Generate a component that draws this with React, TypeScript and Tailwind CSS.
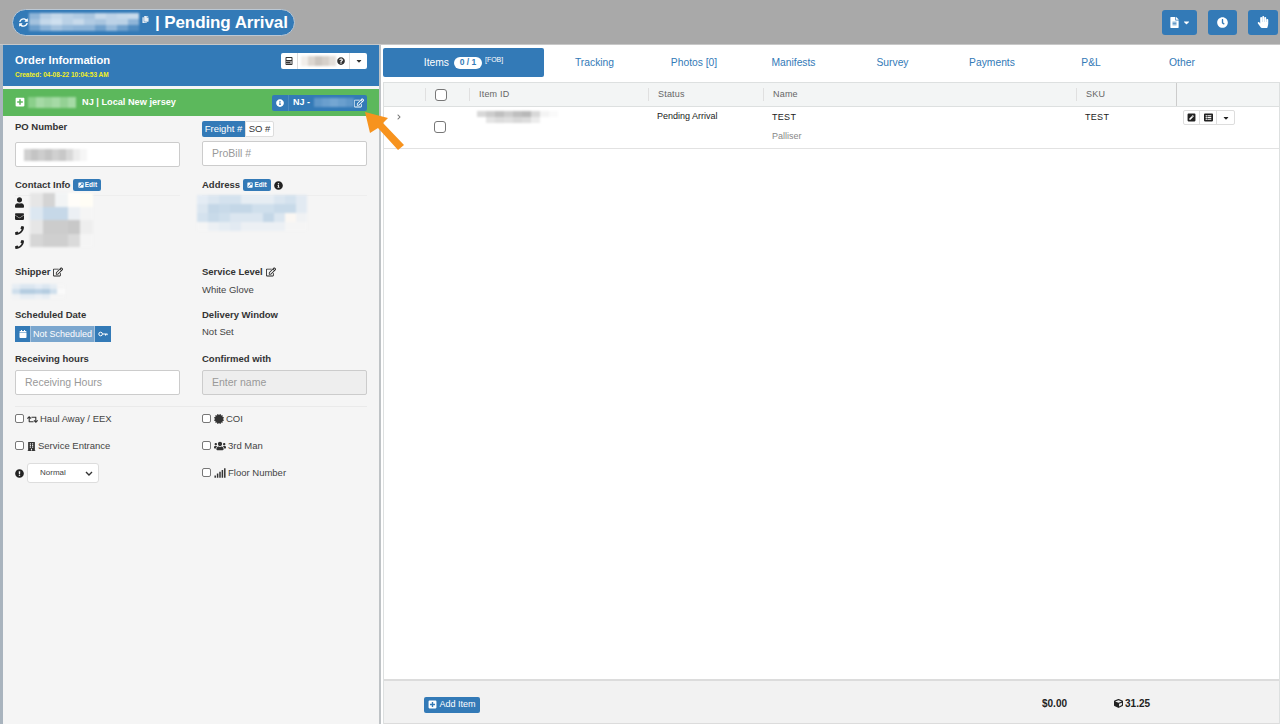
import type { ReactNode } from "react";
import {
  FaSyncAlt,
  FaCopy,
  FaCalculator,
  FaQuestionCircle,
  FaCaretDown,
  FaPlusSquare,
  FaInfoCircle,
  FaRegEdit,
  FaExternalLinkSquareAlt,
  FaUser,
  FaEnvelope,
  FaPhone,
  FaCalendar,
  FaRetweet,
  FaCertificate,
  FaBuilding,
  FaUsers,
  FaExclamationCircle,
  FaSignal,
  FaFileAlt,
  FaClock,
  FaHandPaper,
  FaChevronRight,
  FaCube,
  FaPenSquare,
  FaListAlt,
} from "react-icons/fa";

// pixelated redaction blocks from the screenshot
function Redacted({ rows, cell = 13, h = 13 }: { rows: string[][]; cell?: number; h?: number }) {
  return (
    <div className="flex flex-col blur-[1px]">
      {rows.map((row, i) => (
        <div key={i} className="flex">
          {row.map((c, j) => (
            <div key={j} style={{ width: cell, height: h, backgroundColor: c }} />
          ))}
        </div>
      ))}
    </div>
  );
}

function Label({ children }: { children: ReactNode }) {
  return <span className="text-[9.5px] font-bold leading-3 text-[#333]">{children}</span>;
}

function EditBtn() {
  return (
    <span className="flex h-[12px] w-[28px] items-center justify-center gap-[1px] rounded-[2px] bg-[#337ab7] text-[6.5px] font-bold text-white">
      <FaExternalLinkSquareAlt className="text-[6px]" />
      Edit
    </span>
  );
}

function Check({ label, icon }: { label: string; icon: ReactNode }) {
  return (
    <div className="flex h-[20px] items-center text-[9.5px] text-[#444]">
      <span className="mb-[2px] mr-[1px] h-[9px] w-[9px] rounded-[2px] border border-[#777] bg-white" />
      <span className="mx-[2px] text-[9px] text-[#333]">{icon}</span>
      {label}
    </div>
  );
}

function Th({ w, children, line = true }: { w: string; children?: ReactNode; line?: boolean }) {
  return (
    <div className={`flex h-full items-center ${w}`}>
      {line && <span className="mr-[9px] h-[13px] w-px bg-[#e0e0e0]" />}
      {children}
    </div>
  );
}

const tabs = [
  { label: "Tracking", w: "w-[101px]" },
  { label: "Photos [0]", w: "w-[98px]" },
  { label: "Manifests", w: "w-[101px]" },
  { label: "Survey", w: "w-[97px]" },
  { label: "Payments", w: "w-[102px]" },
  { label: "P&L", w: "w-[96px]" },
  { label: "Other", w: "w-[86px]" },
];

export default function App() {
  return (
    <div className="relative flex h-[724px] w-[1280px] flex-col overflow-hidden bg-white font-['Liberation_Sans',Arial,sans-serif]">
      {/* top bar */}
      <div className="flex h-[45px] shrink-0 items-center justify-between border-b border-[#c8c8c8] bg-[#a9a9a9] pl-3 pr-[2px]">
        <div className="flex h-[27px] w-[283px] items-center rounded-[14px] border border-[#bcc8d4] bg-[#337ab7] pl-[6px] text-white">
          <FaSyncAlt className="text-[9px]" />
          <div className="ml-[1px]">
            <Redacted
              cell={11}
              h={6}
              rows={[
                ["#8fb5d8", "#b5cde4", "#c4d8ea", "#bad1e6", "#b1cbe3", "#a9c5df", "#c8daeb", "#bcd2e7", "#c4d8ea", "#c8daeb"],
                ["#a4c2de", "#c4d8ea", "#cfe0ef", "#bad1e6", "#c8daeb", "#b1cbe3", "#a9c5df", "#bcd2e7", "#bad1e6", "#8fb5d8"],
                ["#6fa0cc", "#8fb5d8", "#a4c2de", "#95b9da", "#8fb5d8", "#8fb5d8", "#6fa0cc", "#95b9da", "#6fa0cc", "#4f8bc0"],
              ]}
            />
          </div>
          <FaCopy className="ml-[3px] mt-[-6px] text-[7px] text-[#e8eef4]" />
          <span className="ml-[6px] whitespace-nowrap text-[17px] font-bold leading-none tracking-[-0.1px]">| Pending Arrival</span>
        </div>
        <div className="flex items-center">
          <div className="flex h-[25px] w-[35px] items-center justify-center gap-[2px] rounded-[3px] bg-[#337ab7] text-white">
            <FaFileAlt className="text-[11px]" />
            <FaCaretDown className="text-[9px]" />
          </div>
          <div className="ml-[11px] flex h-[25px] w-[29px] items-center justify-center rounded-[3px] bg-[#337ab7] text-white">
            <FaClock className="text-[11px]" />
          </div>
          <div className="ml-[11px] flex h-[25px] w-[30px] items-center justify-center rounded-[3px] bg-[#337ab7] text-white">
            <FaHandPaper className="text-[12px]" />
          </div>
        </div>
      </div>

      <div className="flex min-h-0 flex-1">
        {/* order panel */}
        <div className="flex w-[381px] shrink-0 flex-col border-l-[3px] border-r-[2px] border-l-[#a9b4be] border-r-[#bfc3c6] bg-[#f5f5f5]">
          <div className="flex h-[41px] shrink-0 items-start justify-between bg-[#337ab7] pl-3 pr-3 pt-[8px]">
            <div className="flex flex-col">
              <span className="text-[11.2px] font-bold leading-[14px] text-white">Order Information</span>
              <span className="mt-[4px] text-[6.5px] font-bold leading-[8px] text-[#f4f01e]">Created: 04-08-22 10:04:53 AM</span>
            </div>
            <div className="flex h-[16px] w-[86px] items-center rounded-[2px] bg-white text-[#333]">
              <span className="flex h-full w-[17px] items-center justify-center border-r border-[#ddd]">
                <FaCalculator className="text-[8px]" />
              </span>
              <div className="ml-[3px]">
                <Redacted cell={7} h={10} rows={[["#f2eeea", "#dcd6d0", "#ccc6c0", "#d6d0ca", "#e4dfda"]]} />
              </div>
              <FaQuestionCircle className="ml-[1px] text-[8px]" />
              <span className="ml-auto flex h-full w-[18px] items-center justify-center border-l border-[#ddd]">
                <FaCaretDown className="text-[8px]" />
              </span>
            </div>
          </div>
          <div className="mt-[3px] flex h-[27px] shrink-0 items-center justify-between bg-[#5cb85c] pl-3 pr-3 text-white">
            <div className="flex items-center">
              <FaPlusSquare className="text-[10px]" />
              <div className="ml-[3px]">
                <Redacted cell={8} h={11} rows={[["#8bcf8b", "#a5daa5", "#9bd49b", "#a5daa5", "#94d194", "#a5daa5"]]} />
              </div>
              <span className="ml-[6px] text-[9.2px] font-bold">NJ | Local New jersey</span>
            </div>
            <div className="flex h-[16px] w-[95px] items-center rounded-[2px] bg-[#337ab7] text-[9px] font-bold">
              <span className="flex h-full w-[17px] items-center justify-center border-r border-[#4a89c0]">
                <FaInfoCircle className="text-[8px]" />
              </span>
              <span className="ml-[4px]">NJ -</span>
              <div className="ml-[4px]">
                <Redacted cell={8} h={9} rows={[["#5f97c9", "#6a9fce", "#74a6d2", "#6a9fce", "#5f97c9"]]} />
              </div>
              <FaRegEdit className="ml-auto mr-[3px] text-[10px]" />
            </div>
          </div>

          <div className="grid grid-cols-[165px_165px] gap-x-[22px] pl-3">
            {/* PO / freight */}
            <div className="flex h-[53px] flex-col pt-[5px]">
              <Label>PO Number</Label>
              <div className="mt-[9px] flex h-[25px] items-center rounded-[2px] border border-[#ccc] bg-white pl-[8px]">
                <Redacted cell={7} h={12} rows={[["#d0d0d0", "#c4c4c4", "#cdcdcd", "#c4c4c4", "#d0d0d0", "#c8c8c8", "#d8d8d8", "#ececec", "#f6f6f6", "#fff"]]} />
              </div>
            </div>
            <div className="flex h-[53px] flex-col pt-[5px]">
              <div className="flex h-[16px] text-[9.5px]">
                <span className="flex w-[43px] items-center justify-center rounded-l-[2px] bg-[#337ab7] text-white">Freight #</span>
                <span className="flex w-[29px] items-center justify-center rounded-r-[2px] border border-[#ddd] bg-white text-[#333]">SO #</span>
              </div>
              <div className="mt-[4px] flex h-[25px] items-center rounded-[2px] border border-[#ccc] bg-white pl-[9px] text-[10.5px] text-[#999]">ProBill #</div>
            </div>

            {/* contact / address */}
            <div className="flex h-[89px] flex-col pt-[10px]">
              <div className="flex items-center gap-[3px]">
                <Label>Contact Info</Label>
                <EditBtn />
              </div>
              <div className="relative mt-[4px] flex border-t border-[#eee] pt-[1px]">
                <div className="flex flex-col gap-[3px] text-[9px] text-[#222]">
                  <FaUser className="h-[11px]" />
                  <FaEnvelope className="h-[11px]" />
                  <FaPhone className="h-[11px]" />
                  <FaPhone className="h-[11px]" />
                </div>
                <div className="ml-[6px] mt-[-4px]">
                  <Redacted
                    h={13.5}
                    cell={12.5}
                    rows={[
                      ["#e6e6e6", "#d4d4d4", "#f2f4f5", "#fffdf9", "#fffdf5"],
                      ["#dce7f1", "#c6d8e8", "#c6d8e8", "#ecf0f4", "#f5f5f5"],
                      ["#e6e6e6", "#cccccc", "#cccccc", "#c8c8c8", "#eeeeee"],
                      ["#d6d6d6", "#cfcfcf", "#cfcfcf", "#dadada", "#f5f5f5"],
                    ]}
                  />
                </div>
              </div>
            </div>
            <div className="flex h-[89px] flex-col pt-[10px]">
              <div className="flex items-center gap-[3px]">
                <Label>Address</Label>
                <EditBtn />
                <FaInfoCircle className="text-[9px] text-[#222]" />
              </div>
              <div className="mt-[4px] border-t border-[#eee] pt-[1px]">
                <div className="ml-[-5px] mt-[-2px]">
                  <Redacted
                    cell={11}
                    h={9}
                    rows={[
                      ["#e4ecf4", "#dbe6f0", "#d4e2ee", "#d4e2ee", "#e6edf3", "#e6edf3", "#e6edf3", "#dbe6f0", "#d4e2ee", "#e2eaf2"],
                      ["#dbe6f0", "#c4d7e7", "#c8dae9", "#c4d7e7", "#c4d7e7", "#cfdfec", "#cfdfec", "#c8dae9", "#c8dae9", "#e2eaf2"],
                      ["#d4e2ee", "#c8dae9", "#cfdfec", "#dbe6f0", "#dbe6f0", "#dbe6f0", "#c4d7e7", "#dbe6f0", "#fbf7f3", "#f0f2f4"],
                      ["#f5f5f5", "#ecf0f4", "#e6edf3", "#e2eaf2", "#ecf0f4", "#ecf0f4", "#ecf0f4", "#ecf0f4", "#f5f5f5", "#f5f5f5"],
                    ]}
                  />
                </div>
              </div>
            </div>

            {/* shipper / service */}
            <div className="flex h-[43px] flex-col pt-[8px]">
              <div className="flex items-center gap-[3px]">
                <Label>Shipper</Label>
                <FaRegEdit className="text-[10px] text-[#222]" />
              </div>
              <div className="ml-[-3px] mt-[6px]">
                <Redacted
                  cell={7.5}
                  h={5}
                  rows={[
                    ["#e6edf3", "#dbe6f0", "#dbe6f0", "#e4ecf4", "#dbe6f0", "#e6edf3", "#f5f5f5"],
                    ["#cfdfec", "#b5cde1", "#b5cde1", "#bcd2e5", "#b5cde1", "#cfdfec", "#fafafa"],
                    ["#f0f2f4", "#e6edf3", "#e6edf3", "#ecf0f4", "#e6edf3", "#f5f5f5", "#f5f5f5"],
                  ]}
                />
              </div>
            </div>
            <div className="flex h-[43px] flex-col pt-[8px]">
              <div className="flex items-center gap-[3px]">
                <Label>Service Level</Label>
                <FaRegEdit className="text-[10px] text-[#222]" />
              </div>
              <span className="mt-[6px] text-[9.5px] leading-3 text-[#444]">White Glove</span>
            </div>

            {/* schedule */}
            <div className="flex h-[44px] flex-col pt-[8px]">
              <Label>Scheduled Date</Label>
              <div className="mt-[5px] flex h-[16px] w-[98px] text-white">
                <span className="flex w-[15px] items-center justify-center bg-[#337ab7]">
                  <FaCalendar className="text-[8px]" />
                </span>
                <span className="flex w-[65px] items-center justify-center border-x border-[#a8c4de] bg-[#7aa6ce] pt-[1px] text-[9px]">Not Scheduled</span>
                <span className="flex w-[16px] items-center justify-center bg-[#337ab7]">
                  <svg width="10" height="6" viewBox="0 0 10 6" fill="none" stroke="#fff" strokeWidth="1">
                    <circle cx="2.6" cy="3" r="1.8" />
                    <path d="M4.5 3H9.5M7.5 3v1.6M9 3v1.2" />
                  </svg>
                </span>
              </div>
            </div>
            <div className="flex h-[44px] flex-col pt-[8px]">
              <Label>Delivery Window</Label>
              <span className="mt-[5px] text-[9.5px] leading-3 text-[#444]">Not Set</span>
            </div>

            {/* receiving */}
            <div className="flex h-[53px] flex-col pt-[8px]">
              <Label>Receiving hours</Label>
              <div className="mt-[5px] flex h-[25px] items-center rounded-[2px] border border-[#ccc] bg-white pl-[9px] text-[10.5px] text-[#999]">Receiving Hours</div>
            </div>
            <div className="flex h-[53px] flex-col pt-[8px]">
              <Label>Confirmed with</Label>
              <div className="mt-[5px] flex h-[25px] items-center rounded-[2px] border border-[#ccc] bg-[#eee] pl-[9px] text-[10.5px] text-[#999]">Enter name</div>
            </div>
          </div>

          <div className="mx-3 mt-[8px] h-px w-[352px] bg-[#eaeaea]" />

          <div className="grid grid-cols-[165px_165px] gap-x-[22px] gap-y-[7px] pl-3 pt-[2px]">
            <Check icon={<FaRetweet className="text-[11px]" />} label="Haul Away / EEX" />
            <Check icon={<FaCertificate className="text-[10px]" />} label="COI" />
            <Check icon={<FaBuilding />} label="Service Entrance" />
            <Check icon={<FaUsers className="text-[12px]" />} label="3rd Man" />
            <div className="flex h-[20px] items-center">
              <FaExclamationCircle className="text-[9px] text-[#222]" />
              <div className="ml-[3px] flex h-[20px] w-[72px] items-center justify-between rounded-[3px] border border-[#ddd] bg-white pl-[12px] pr-[5px] text-[8px] text-[#444]">
                Normal
                <svg width="8" height="5" viewBox="0 0 8 5" fill="none" stroke="#333" strokeWidth="1.4">
                  <path d="M1 1l3 3 3-3" />
                </svg>
              </div>
            </div>
            <Check icon={<FaSignal className="text-[12px]" />} label="Floor Number" />
          </div>
        </div>

        {/* items area */}
        <div className="ml-[2px] flex min-w-0 flex-1 flex-col">
          <div className="flex h-[37px] shrink-0 items-start pt-[3px] text-[10.3px] text-[#337ab7]">
            <div className="flex h-[29px] w-[161px] items-center justify-center rounded-[2px] bg-[#337ab7] text-white">
              Items
              <span className="ml-[5px] flex h-[12px] w-[28px] items-center justify-center rounded-full bg-white text-[8.5px] font-bold text-[#337ab7]">0 / 1</span>
              <span className="mb-[5px] ml-[3px] text-[7px]">[FOB]</span>
            </div>
            {tabs.map((t) => (
              <div key={t.label} className={`flex h-[29px] items-center justify-center ${t.w}`}>
                {t.label}
              </div>
            ))}
          </div>

          <div className="flex min-h-0 flex-1 flex-col border border-b-0 border-[#dde0e0]">
            <div className="flex h-[24px] shrink-0 items-center border-b border-[#dde0e0] bg-[#f3f5f5] text-[9px] tracking-[0.2px] text-[#666]">
              <div className="w-[41px]" />
              <Th w="w-[44px]">
                <span className="h-[12px] w-[12px] rounded-[3px] border border-[#777] bg-white" />
              </Th>
              <Th w="w-[179px]">Item ID</Th>
              <Th w="w-[115px]">Status</Th>
              <Th w="w-[313px]">Name</Th>
              <Th w="w-[100px]">SKU</Th>
              <div className="h-full flex-1 border-l border-[#ccc]" />
            </div>
            <div className="flex h-[42px] shrink-0 border-b border-[#e2e2e2] text-[9px] leading-3 text-[#222]">
              <div className="w-[41px] pl-[12px] pt-[7px]">
                <FaChevronRight className="text-[6px] text-[#777]" />
              </div>
              <div className="w-[44px] pl-[9px] pt-[14px]">
                <span className="block h-[12px] w-[12px] rounded-[3px] border border-[#777] bg-white" />
              </div>
              <div className="w-[179px] pl-[8px] pt-[4px]">
                <Redacted
                  cell={9}
                  h={6}
                  rows={[
                    ["#d8d8d8", "#cccccc", "#bfbfbf", "#cccccc", "#bfbfbf", "#b8b8b8", "#d8d8d8", "#f4f4f4", "#fafafa", "#fff"],
                    ["#fff", "#e4e4e4", "#dcdcdc", "#e0e0e0", "#d8d8d8", "#dcdcdc", "#ececec", "#fff", "#fff", "#fff"],
                  ]}
                />
              </div>
              <div className="w-[115px] pl-[9px] pt-[3px]">Pending Arrival</div>
              <div className="flex w-[313px] flex-col pl-[9px] pt-[4px]">
                <span className="tracking-[0.3px]">TEST</span>
                <span className="mt-[7px] text-[9px] text-[#888]">Palliser</span>
              </div>
              <div className="w-[99px] pl-[9px] pt-[4px] tracking-[0.3px]">TEST</div>
              <div className="pl-[8px] pt-[3px]">
                <div className="flex h-[15px] w-[52px] items-center rounded-[2px] border border-[#ddd] bg-white">
                  <span className="flex h-full w-[16px] items-center justify-center border-r border-[#ddd]">
                    <FaPenSquare className="text-[9px]" />
                  </span>
                  <span className="flex h-full w-[17px] items-center justify-center border-r border-[#ddd]">
                    <FaListAlt className="text-[9px]" />
                  </span>
                  <span className="flex h-full flex-1 items-center justify-center">
                    <FaCaretDown className="text-[8px]" />
                  </span>
                </div>
              </div>
            </div>
            <div className="flex-1" />
            <div className="flex h-[45px] shrink-0 items-center border-t-2 border-b border-[#dcdcdc] bg-[#f2f2f2] pl-[40px] pt-[5px] text-[10px] font-bold text-[#222]">
              <div className="flex h-[16px] w-[56px] items-center justify-center gap-[2px] rounded-[2px] bg-[#337ab7] text-[9px] font-normal text-white">
                <FaPlusSquare className="text-[9px]" />
                Add Item
              </div>
              <span className="ml-[562px] mt-[-3px]">$0.00</span>
              <FaCube className="ml-[47px] mt-[-3px] text-[9px]" />
              <span className="ml-[2px] mt-[-3px]">31.25</span>
            </div>
          </div>
        </div>
      </div>

      {/* orange annotation arrow */}
      <svg className="absolute left-[360px] top-[106px]" width="50" height="50" viewBox="0 0 50 50">
        <polygon points="5,6 28,12 23,17 44,39 38,44 18,22 10,27" fill="#f7931e" />
      </svg>
    </div>
  );
}
